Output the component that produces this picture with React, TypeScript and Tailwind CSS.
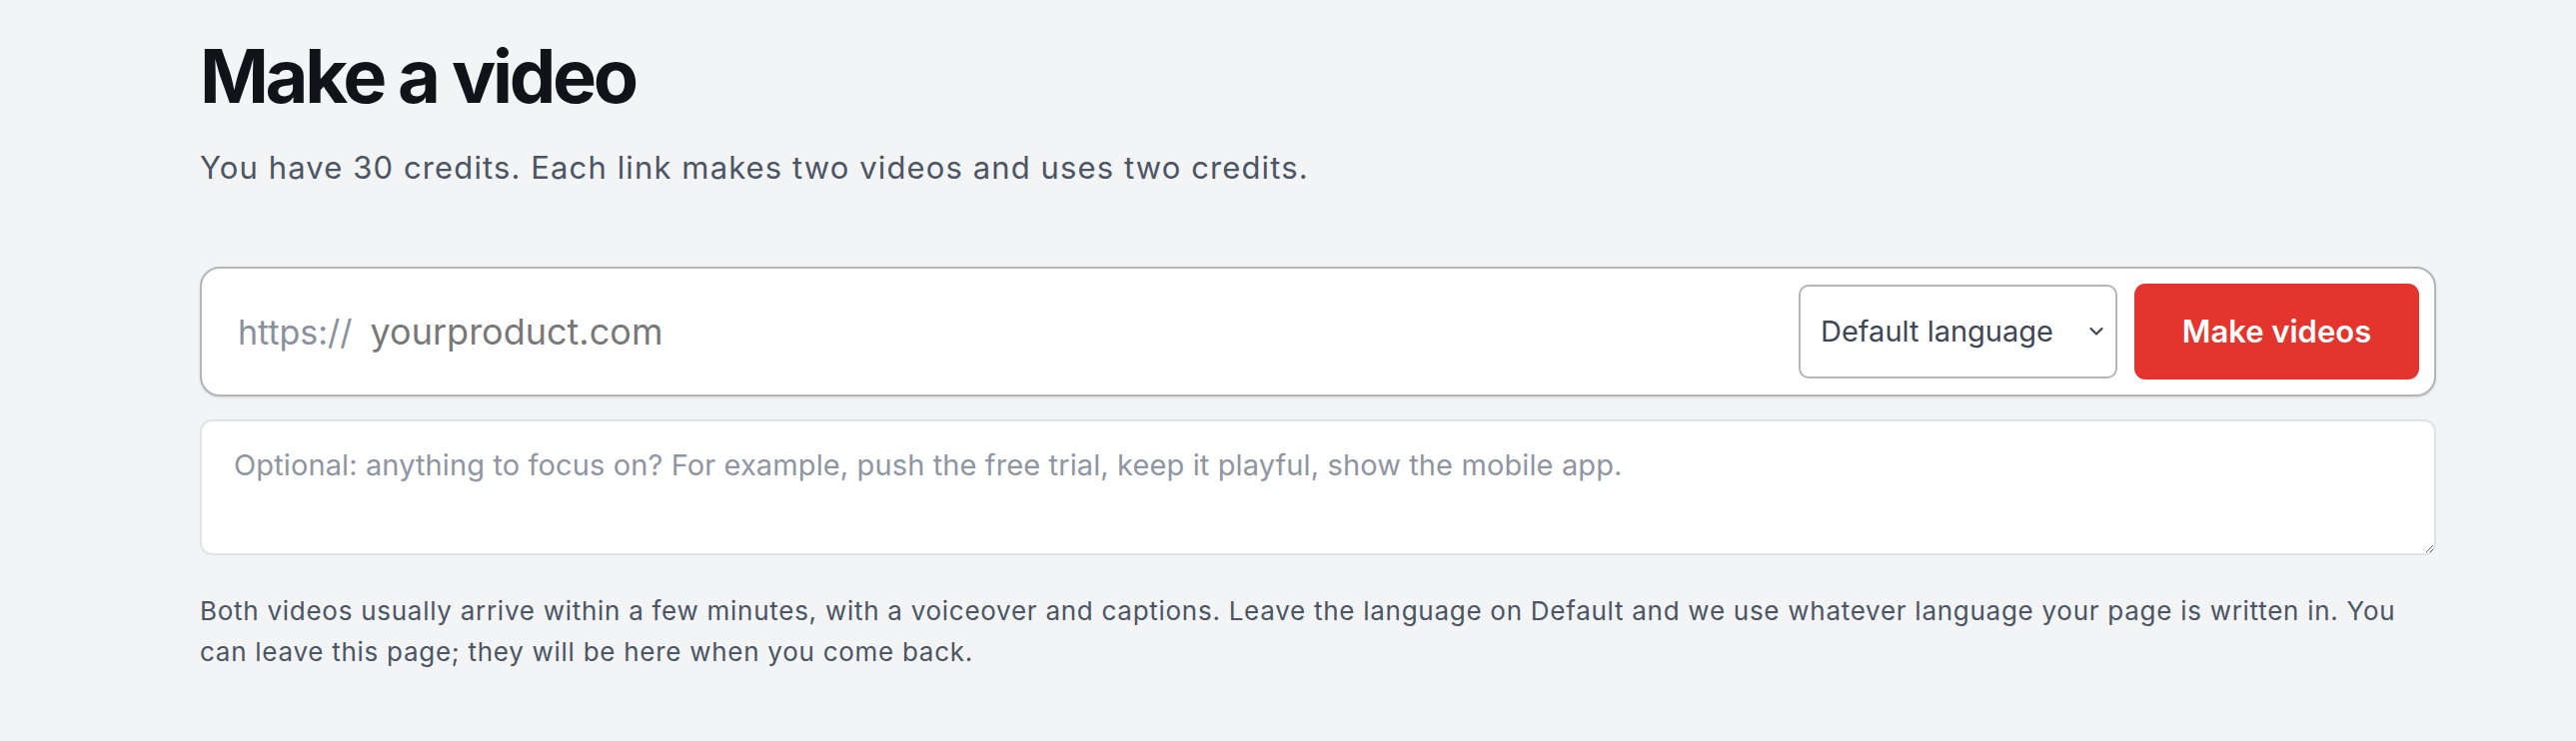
import React from "react";

export default function App() {
  return (
    <div
      className="min-h-screen w-full bg-[#f3f4f6]"
      style={{ fontFamily: "Inter, 'Noto Sans', 'Liberation Sans', sans-serif" }}
    >
      <div className="ml-[200px] w-[2238px] pt-[39px]">
        <h1 className="text-[74px] font-bold leading-none tracking-[-0.045em] text-[#111318]">
          Make a video
        </h1>
        <p className="mt-[35px] text-[31px] leading-[40px] tracking-[0.036em] text-[#4b5563]">
          You have 30 credits. Each link makes two videos and uses two credits.
        </p>

        <div className="mt-[79px] flex h-[130px] items-center rounded-[20px] border-2 border-[#b3b5b9] bg-white pr-[15px] pl-[36px] shadow-sm">
          <span className="text-[34px] text-[#8a909c]">https://</span>
          <input
            className="ml-[18px] min-w-0 flex-1 bg-transparent text-[36px] text-[#374151] outline-none placeholder:text-[#787878]"
            placeholder="yourproduct.com"
          />
          <div className="relative ml-4 h-[94px] w-[319px]">
            <select className="h-full w-full appearance-none rounded-[10px] border-2 border-[#b3b5b9] bg-white pl-[20px] text-[29px] text-[#3f4654] outline-none">
              <option>Default language</option>
            </select>
            <svg
              className="pointer-events-none absolute top-1/2 right-[11px] h-[18px] w-[20px] -translate-y-1/2"
              viewBox="0 0 20 18"
              fill="none"
              stroke="#3f4654"
              strokeWidth="2.2"
              strokeLinecap="round"
              strokeLinejoin="round"
            >
              <path d="M4.5 6l5.5 5.5L15.5 6" />
            </svg>
          </div>
          <button className="ml-[17px] h-[96px] w-[285px] rounded-[11px] bg-[#e3342d] text-[31px] font-semibold text-white">
            Make videos
          </button>
        </div>

        <textarea
          className="mt-[23px] block h-[136px] w-full rounded-[12px] border-2 border-[#e1e2e5] bg-white pt-[23px] pl-[32px] text-[29px] leading-[42px] tracking-[0.004em] text-[#374151] outline-none placeholder:text-[#8f95a1]"
          placeholder="Optional: anything to focus on? For example, push the free trial, keep it playful, show the mobile app."
        />

        <p className="mt-[35px] text-[26px] leading-[41px] tracking-[0.028em] text-[#4b5563]">
          Both videos usually arrive within a few minutes, with a voiceover and captions. Leave the language on Default and we use whatever language your page is written in. You can leave this page; they will be here when you come back.
        </p>
      </div>
    </div>
  );
}
